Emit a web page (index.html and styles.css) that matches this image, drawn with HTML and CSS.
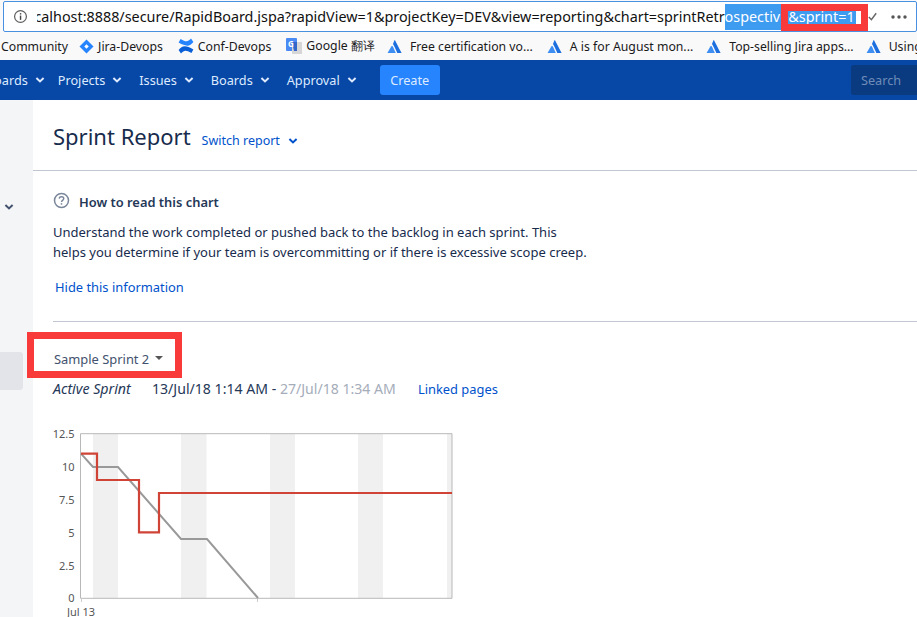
FILE: index.html
```html
<!DOCTYPE html>
<html lang="en">
<head>
<meta charset="utf-8">
<title>Sprint Report</title>
<link rel="stylesheet" href="styles.css">
</head>
<body>
<header class="browser">
  <div class="address">
    <svg class="info" viewBox="0 0 16 16" width="15" height="15"><circle cx="8" cy="8" r="6.3" fill="none" stroke="#5f5f5f" stroke-width="1.3"/><rect x="7.3" y="7" width="1.5" height="4.6" fill="#444"/><rect x="7.3" y="4.4" width="1.5" height="1.5" fill="#444"/></svg>
    <div class="url"><span class="url-text">localhost:8888/secure/RapidBoard.jspa?rapidView=1&amp;projectKey=DEV&amp;view=reporting&amp;chart=sprintRetr<span class="sel">ospective&amp;sprint=1<i class="caret"></i></span></span></div>
    <svg class="check" viewBox="0 0 12 12" width="11" height="11"><path d="M2 6.5 L4.8 9.5 L10 2.5" fill="none" stroke="#666" stroke-width="1.6"/></svg>
    <svg class="dots" viewBox="0 0 16 4" width="16" height="4"><circle cx="2" cy="2" r="1.7" fill="#555"/><circle cx="8" cy="2" r="1.7" fill="#555"/><circle cx="14" cy="2" r="1.7" fill="#555"/></svg>
  </div>
  <div class="red-box url-box"></div>
  <div class="bookmarks">
    <span class="bm bm-first">Community</span>
    <span class="bm bm-jira"><svg viewBox="0 0 16 16" width="15" height="15"><path d="M8 0.5 L15.5 8 L8 15.5 L0.5 8Z" fill="#2684ff"/><path d="M8 5.6 L10.4 8 L8 10.4 L5.6 8Z" fill="#fff"/></svg>Jira-Devops</span>
    <span class="bm bm-conf"><svg viewBox="0 0 16 16" width="16" height="16"><path d="M0.6 12 C4 8 7 6.6 15.4 11.4 L13.4 15 C8 12 6.4 11.8 3 15.4Z" fill="#0a5fd6"/><path d="M15.4 4 C12 8 9 9.4 0.6 4.6 L2.6 1 C8 4 9.6 4.2 13 0.6Z" fill="#2684ff"/></svg>Conf-Devops</span>
    <span class="bm bm-google"><svg viewBox="0 0 16 16" width="16" height="16"><rect x="0" y="0" width="11" height="13" rx="1" fill="#4a8af4"/><rect x="6" y="4" width="10" height="12" fill="#d6d6d6"/><path d="M6 4 H11 V13 H8Z" fill="#3367c9"/><text x="2" y="9" class="g-letter">G</text></svg>Google 翻译</span>
    <span class="bm bm-a1"><svg viewBox="0 0 16 16" width="15" height="15"><use href="#atl"/></svg>Free certification vo...</span>
    <span class="bm bm-a2"><svg viewBox="0 0 16 16" width="15" height="15"><use href="#atl"/></svg>A is for August mon...</span>
    <span class="bm bm-a3"><svg viewBox="0 0 16 16" width="15" height="15"><use href="#atl"/></svg>Top-selling Jira apps...</span>
    <span class="bm bm-a4"><svg viewBox="0 0 16 16" width="15" height="15"><use href="#atl"/></svg>Using</span>
  </div>
  <svg class="defs" width="0" height="0"><defs><g id="atl"><path d="M8.3 0.8 C10 4 13 10 15.6 15 H11 C9.5 11.5 8 8 6.4 5.4 C7 3.4 7.6 2 8.3 0.8Z" fill="#1d6fe0"/><path d="M4.6 8 C5.5 7.2 6 7.4 6.5 8.4 L9.4 15 H0.6Z" fill="#3d8ef2"/></g></defs></svg>
</header>
<nav class="topnav">
  <a class="nav-item nav-first">Dashboards<svg viewBox="0 0 10 8" width="10" height="8"><use href="#chev"/></svg></a>
  <a class="nav-item">Projects<svg viewBox="0 0 10 8" width="10" height="8"><use href="#chev"/></svg></a>
  <a class="nav-item">Issues<svg viewBox="0 0 10 8" width="10" height="8"><use href="#chev"/></svg></a>
  <a class="nav-item">Boards<svg viewBox="0 0 10 8" width="10" height="8"><use href="#chev"/></svg></a>
  <a class="nav-item">Approval<svg viewBox="0 0 10 8" width="10" height="8"><use href="#chev"/></svg></a>
  <a class="create">Create</a>
  <div class="search">Search</div>
  <svg class="defs" width="0" height="0"><defs><path id="chev" d="M1.4 2 L5 5.4 L8.6 2" fill="none" stroke="currentColor" stroke-width="2"/></defs></svg>
</nav>
<div class="page">
  <aside class="side">
    <svg class="side-chev" viewBox="0 0 10 8" width="10" height="8"><use href="#chev"/></svg>
    <div class="side-active"></div>
  </aside>
  <main class="content">
    <div class="report-head">
      <h1>Sprint Report</h1>
      <a class="switch">Switch report<svg viewBox="0 0 10 8" width="10" height="8"><use href="#chev"/></svg></a>
    </div>
    <section class="help">
      <div class="help-title">
        <svg viewBox="0 0 18 18" width="17" height="17"><circle cx="9" cy="9" r="7.4" fill="none" stroke="#7a869a" stroke-width="1.6"/><path d="M6.6 7 C6.8 4.4 11.4 4.4 11.4 7 C11.4 8.8 9 8.8 9 10.6" fill="none" stroke="#7a869a" stroke-width="1.5"/><rect x="8.2" y="11.8" width="1.6" height="1.6" fill="#7a869a"/></svg>
        <h2>How to read this chart</h2>
      </div>
      <p>Understand the work completed or pushed back to the backlog in each sprint. This<br>helps you determine if your team is overcommitting or if there is excessive scope creep.</p>
      <a class="hide">Hide this information</a>
    </section>
    <section class="sprint">
      <div class="picker">Sample Sprint 2<i class="tri"></i></div>
      <div class="meta">
        <em>Active Sprint</em>
        <span class="dates">13/Jul/18 1:14 AM - <span class="end">27/Jul/18 1:34 AM</span></span>
        <a class="linked">Linked pages</a>
      </div>
      <svg class="chart" width="420" height="197" viewBox="40 420 420 197">
        <g fill="#f0f0f0">
          <rect x="93" y="434" width="25" height="164"/>
          <rect x="181" y="434" width="25.500" height="164"/>
          <rect x="270" y="434" width="25" height="164"/>
          <rect x="358" y="434" width="25" height="164"/>
          <rect x="447" y="434" width="5" height="164"/>
        </g>
        <path d="M80.500 433.700 H452 V598.300 H80.500Z" fill="none" stroke="#b8b8b8" stroke-width="1"/>
        <path d="M81.500 598.500 V602 M257.500 598.500 V602" stroke="#ccc" stroke-width="1"/>
        <polyline points="81,453.700 93,467 118,467 181,539 207,539 258,598" fill="none" stroke="#999" stroke-width="2"/>
        <polyline points="81,453.700 97,453.700 97,480 139,480 139,532.400 159,532.400 159,493 452,493" fill="none" stroke="#d04437" stroke-width="2.200"/>
        <g class="axis" text-anchor="end">
          <text x="74.500" y="438">12.5</text>
          <text x="74.500" y="471">10</text>
          <text x="74.500" y="504">7.5</text>
          <text x="74.500" y="537">5</text>
          <text x="74.500" y="570">2.5</text>
          <text x="74.500" y="602">0</text>
        </g>
        <text class="axis" x="67" y="616">Jul 13</text>
      </svg>
    </section>
  </main>
</div>
<div class="red-box picker-box"></div>
</body>
</html>
```
FILE: styles.css
```css
* { box-sizing: border-box; }
html, body { margin: 0; padding: 0; }
body {
  width: 917px;
  height: 617px;
  overflow: hidden;
  position: relative;
  background: #fff;
  font-family: "Noto Sans", "Open Sans", sans-serif;
  color: #172b4d;
}
.defs { position: absolute; }

.browser { height: 60px; background: #f9f9fa; display: flex; flex-direction: column; }
.address {
  height: 31px;
  flex: none;
  margin: 1px 0 0 3px;
  background: #fff;
  border: 1px solid #4a90e2;
  border-radius: 2px;
  display: flex;
  align-items: center;
  padding-left: 9px;
}
.info { flex: none; }
.url { width: 827px; margin-left: 9px; overflow: hidden; white-space: nowrap; flex: none; font-size: 14.37px; color: #111; line-height: 26px; height: 26px; }
.url-text { display: inline-block; margin-left: -15px; }
.sel { background: #3d9bf0; color: #fff; display: inline-block; }
.caret { display: inline-block; width: 6px; height: 16px; background: #fff; vertical-align: -3px; margin-left: 1px; }
.check { flex: none; margin-left: 3px; }
.dots { flex: none; margin-left: 13px; }

.bookmarks { display: flex; align-items: center; height: 28px; flex: none; white-space: nowrap; overflow: hidden; font-size: 12.25px; color: #1a1a1a; }
.bm { display: inline-flex; align-items: center; gap: 4px; flex: none; }
.bm-first { margin-left: 1px; }
.bm-jira { margin-left: 11px; }
.bm-conf { margin-left: 15px; }
.bm-google { margin-left: 15px; }
.bm-a1 { margin-left: 12px; }
.bm-a1 svg, .bm-a2 svg, .bm-a3 svg, .bm-a4 svg { margin-right: 4px; }
.bm-a2 { margin-left: 14px; }
.bm-a3 { margin-left: 13px; }
.bm-a4 { margin-left: 12px; }
.g-letter { font-size: 8px; font-weight: 700; fill: #fff; }

.topnav { height: 40px; background: #0747a6; color: #deebff; display: flex; align-items: center; font-size: 12.7px; white-space: nowrap; overflow: hidden; }
.nav-item { display: inline-flex; align-items: center; gap: 7px; margin-right: 17px; }
.nav-first { margin-left: -44px; margin-right: 13px; }
.nav-item svg { color: #deebff; }
.create { background: #2684ff; color: #deebff; width: 60px; height: 30px; border-radius: 3px; display: flex; align-items: center; justify-content: center; margin-left: 6px; }
.search { margin-left: auto; width: 66px; height: 30px; background: #0a3a80; color: #6f8db8; border-radius: 3px 0 0 3px; display: flex; align-items: center; padding-left: 10px; }

.page { display: flex; height: 517px; }
.side { width: 33px; flex: none; background: #f4f5f7; position: relative; color: #42526e; display: flex; flex-direction: column; }
.side-chev { margin: 103px 0 0 4px; }
.side-active { width: 23px; height: 38px; margin-top: 141px; background: #e2e4e9; border-radius: 0 3px 3px 0; }
.content { flex: 1; min-width: 0; }

.report-head { height: 71px; display: flex; align-items: baseline; padding: 18px 0 0 20px; border-bottom: 1px solid #c1c7d0; }
h1 { margin: 0; font-size: 22px; font-weight: 400; line-height: 36px; color: #172b4d; }
.switch { margin-left: 11px; font-size: 12.5px; color: #0052cc; display: inline-flex; align-items: center; gap: 8px; }
.switch svg { color: #0052cc; }

.help { margin-left: 20px; height: 151px; border-bottom: 1px solid #c1c7d0; padding-top: 21px; }
.help-title { display: flex; align-items: center; gap: 9px; height: 20px; }
.help-title svg { flex: none; margin-top: -4px; }
h2 { margin: 0; font-size: 12.9px; font-weight: 600; color: #253858; }
.help p { margin: 10px 0 0; font-size: 13px; line-height: 20px; color: #172b4d; white-space: nowrap; }
.hide { display: block; margin: 15px 0 0 2px; font-size: 12.9px; line-height: 20px; color: #0052cc; }

.sprint { margin-left: 20px; }
.picker { margin-top: 27px; font-size: 12.9px; line-height: 20px; color: #42526e; padding-left: 1px; display: flex; align-items: center; }
.tri { width: 0; height: 0; border: 4px solid transparent; border-top: 4px solid #555; border-bottom: 0; margin-left: 6px; margin-top: -3px; }
.meta { margin-top: 10px; font-size: 14.1px; line-height: 20px; display: flex; color: #253858; white-space: nowrap; }
.meta em { width: 99px; font-size: 14.2px; }
.end { color: #a5adba; }
.linked { margin-left: 22px; color: #0052cc; font-size: 12.9px; }
.chart { display: block; margin: 21px 0 0 -13px; }
.axis, .axis text { font-family: "Noto Sans", sans-serif; font-size: 11px; fill: #555; }

.red-box { position: absolute; border: 7px solid #f93a3a; pointer-events: none; }
.url-box { left: 781px; top: 4px; width: 87px; height: 27px; }
.picker-box { left: 27px; top: 332px; width: 155px; height: 46px; }
```
